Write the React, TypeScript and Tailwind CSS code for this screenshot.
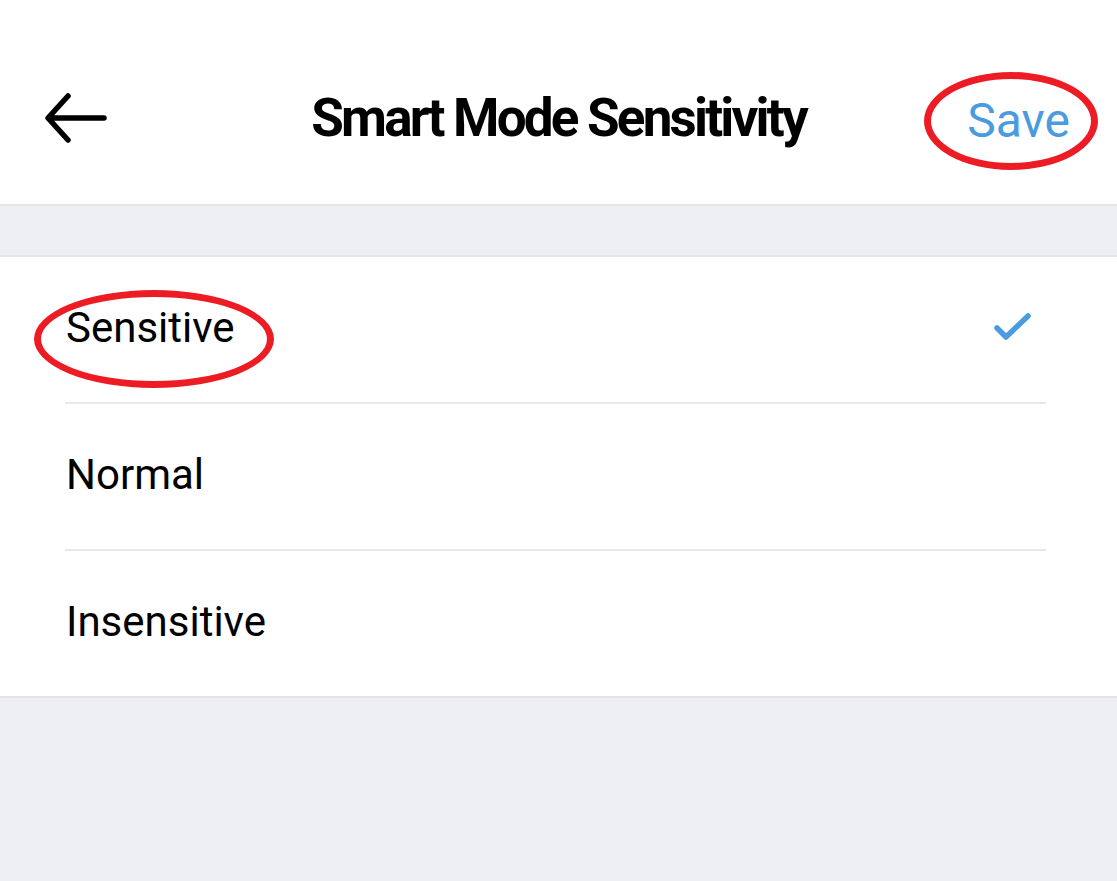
import React from "react";

const options = ["Sensitive", "Normal", "Insensitive"];

function BackArrow() {
  return (
    <svg width="62" height="52" viewBox="0 0 62 52" fill="none">
      <path
        d="M59 26H4M23 4L3 26L23 48"
        stroke="#000"
        strokeWidth="5.5"
        strokeLinecap="round"
        strokeLinejoin="round"
      />
    </svg>
  );
}

function Check() {
  return (
    <svg width="40" height="32" viewBox="0 0 40 32" fill="none">
      <path
        d="M4 16L13 25L35 4"
        stroke="#4a9be0"
        strokeWidth="5.5"
        strokeLinecap="round"
        strokeLinejoin="round"
      />
    </svg>
  );
}

export default function App() {
  const [selected, setSelected] = React.useState("Sensitive");

  return (
    <div
      className="relative min-h-[881px] bg-[#eeeff3]"
      style={{ fontFamily: "Roboto, 'Noto Sans', sans-serif" }}
    >
      <header className="h-[206px] bg-white border-b-2 border-[#e4e5e9] pt-[70px]">
        <div className="grid grid-cols-[1fr_auto_1fr] items-center h-[96px]">
          <div className="pl-[45px] flex items-center">
            <BackArrow />
          </div>
          <h1 className="text-[53px] font-bold tracking-[-0.053em] text-black leading-none">
            Smart Mode Sensitivity
          </h1>
          <div className="flex justify-end pr-[47px]">
            <button className="text-[48px] text-[#4a9be0] leading-none pt-[6px]">
              Save
            </button>
          </div>
        </div>
      </header>

      <div className="h-[49px]" />

      <div className="bg-white border-y-2 border-[#e4e5e9]">
        {options.map((opt, i) => (
          <div key={opt}>
            {i > 0 && <div className="mx-[65px] mr-[71px] h-[2px] bg-[#e8e8ea]" />}
            <div
              className="h-[145px] flex items-center justify-between pl-[66px] pr-[84px] pb-[3px] cursor-pointer"
              onClick={() => setSelected(opt)}
            >
              <span className="text-[42px] text-black leading-none">{opt}</span>
              {selected === opt && <Check />}
            </div>
          </div>
        ))}
      </div>

      {/* red annotation ellipses */}
      <div className="absolute left-[924px] top-[72px] w-[174px] h-[98px] rounded-[50%] border-[7px] border-[#ed1c24] pointer-events-none" />
      <div className="absolute left-[34px] top-[290px] w-[240px] h-[98px] rounded-[50%] border-[7px] border-[#ed1c24] pointer-events-none" />
    </div>
  );
}
